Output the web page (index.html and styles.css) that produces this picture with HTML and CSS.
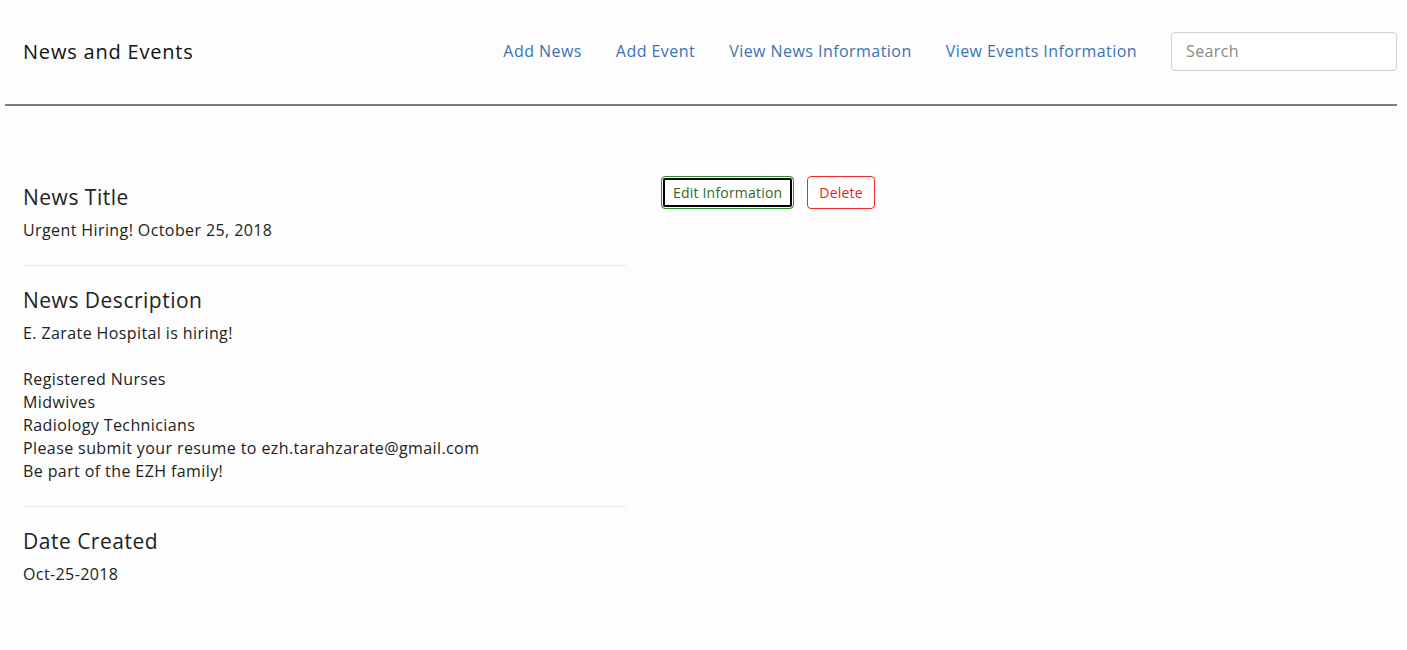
FILE: index.html
```html
<!DOCTYPE html>
<html lang="en">
<head>
<meta charset="utf-8">
<title>News and Events</title>
<link rel="stylesheet" href="styles.css">
</head>
<body>
<header class="navbar">
  <div class="brand">News and Events</div>
  <nav class="nav">
    <a class="nav-link" href="#">Add News</a>
    <a class="nav-link" href="#">Add Event</a>
    <a class="nav-link" href="#">View News Information</a>
    <a class="nav-link" href="#">View Events Information</a>
    <input class="search" type="text" placeholder="Search">
  </nav>
</header>
<hr class="rule">
<main class="content">
  <div class="details">
    <section class="field">
      <h3 class="field-title">News Title</h3>
      <p class="field-text">Urgent Hiring! October 25, 2018</p>
    </section>
    <section class="field">
      <h3 class="field-title">News Description</h3>
      <p class="field-text">E. Zarate Hospital is hiring!<br><br>Registered Nurses<br>Midwives<br>Radiology Technicians<br>Please submit your resume to ezh.tarahzarate@gmail.com<br>Be part of the EZH family!</p>
    </section>
    <section class="field last">
      <h3 class="field-title">Date Created</h3>
      <p class="field-text">Oct-25-2018</p>
    </section>
  </div>
  <div class="actions">
    <button class="btn btn-edit" type="button">Edit Information</button>
    <button class="btn btn-delete" type="button">Delete</button>
  </div>
</main>
</body>
</html>
```

FILE: styles.css
```css
html, body {
  margin: 0;
  padding: 0;
  background: #fdfdfd;
}
body {
  font-family: "Open Sans", "Noto Sans", sans-serif;
  color: #222;
}
.navbar {
  display: flex;
  align-items: center;
  justify-content: space-between;
  height: 102px;
  padding: 0 10px 2px 23px;
}
.brand {
  font-size: 20px;
  color: #111;
  letter-spacing: 0.8px;
}
.nav {
  display: flex;
  align-items: center;
}
.nav-link {
  color: #3a72b5;
  text-decoration: none;
  font-size: 16px;
  letter-spacing: 0.45px;
  margin-right: 34px;
}
.search {
  width: 226px;
  height: 39px;
  box-sizing: border-box;
  border: 1px solid #cfcfcf;
  border-radius: 4px;
  padding: 0 14px;
  font-family: inherit;
  font-size: 16px;
  letter-spacing: 0.4px;
  background: #fff;
}
.search::placeholder {
  color: #8a8a8a;
}
.rule {
  margin: 0 10px 0 5px;
  border: 0;
  height: 2px;
  background: #7f7f7f;
}
.content {
  display: flex;
  align-items: flex-start;
  gap: 35px;
  padding: 57px 0 0 23px;
}
.details {
  width: 603px;
}
.field {
  padding: 22px 0 23px;
  border-bottom: 1px solid #e8e8e8;
}
.field.last {
  border-bottom: 0;
}
.field-title {
  margin: 0 0 10px;
  font-size: 21px;
  font-weight: 500;
  line-height: 24px;
  letter-spacing: 0.5px;
  color: #222;
}
.field-text {
  margin: 0;
  font-size: 16px;
  line-height: 23px;
  letter-spacing: 0.4px;
  color: #222;
}
.actions {
  display: flex;
  gap: 13px;
  padding-top: 13px;
}
.btn {
  height: 33px;
  box-sizing: border-box;
  border-radius: 4px;
  font-family: inherit;
  font-size: 14px;
  letter-spacing: 0.2px;
  padding: 0 11px;
  background: #fff;
  cursor: pointer;
}
.btn-edit {
  border: 1px solid #2b8a2b;
  box-shadow: inset 0 0 0 1px #fff, inset 0 0 0 3px #000;
  color: #2a6d1f;
}
.btn-delete {
  border: 1px solid #f0262b;
  color: #e8202a;
}
```
